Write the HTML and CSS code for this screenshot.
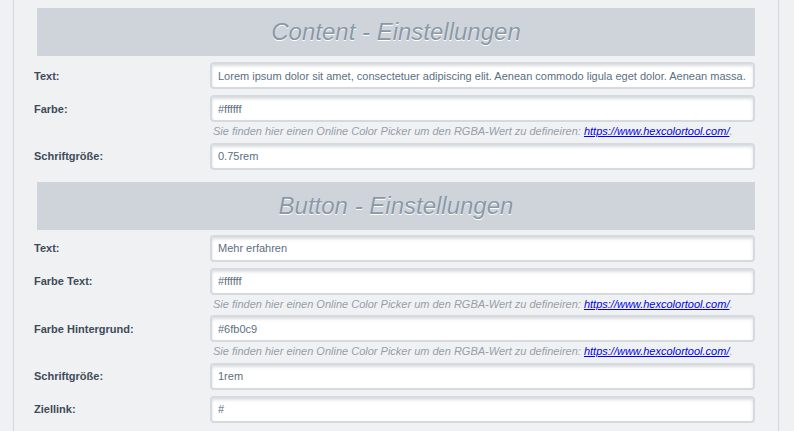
FILE: index.html
```html
<!DOCTYPE html>
<html lang="de">
<head>
  <meta charset="UTF-8" />
  <title>Einstellungen</title>
  <link rel="stylesheet" href="styles.css">
</head>
<body>
  <div class="panel">
    <h2 class="section-title">Content - Einstellungen</h2>
    <div class="form-row">
      <label>Text:</label>
      <input type="text" value="Lorem ipsum dolor sit amet, consectetuer adipiscing elit. Aenean commodo ligula eget dolor. Aenean massa." />
    </div>
    <div class="form-row">
      <label>Farbe:</label>
      <input type="text" value="#ffffff" />
      <div class="hint">Sie finden hier einen Online Color Picker um den RGBA-Wert zu defineiren: <a href="#">https://www.hexcolortool.com/</a>.</div>
    </div>
    <div class="form-row">
      <label>Schriftgröße:</label>
      <input type="text" value="0.75rem" />
    </div>

    <h2 class="section-title">Button - Einstellungen</h2>
    <div class="form-row">
      <label>Text:</label>
      <input type="text" value="Mehr erfahren" />
    </div>
    <div class="form-row">
      <label>Farbe Text:</label>
      <input type="text" value="#ffffff" />
      <div class="hint">Sie finden hier einen Online Color Picker um den RGBA-Wert zu defineiren: <a href="#">https://www.hexcolortool.com/</a>.</div>
    </div>
    <div class="form-row">
      <label>Farbe Hintergrund:</label>
      <input type="text" value="#6fb0c9" />
      <div class="hint">Sie finden hier einen Online Color Picker um den RGBA-Wert zu defineiren: <a href="#">https://www.hexcolortool.com/</a>.</div>
    </div>
    <div class="form-row">
      <label>Schriftgröße:</label>
      <input type="text" value="1rem" />
    </div>
    <div class="form-row">
      <label>Ziellink:</label>
      <input type="text" value="#" />
    </div>
  </div>
</body>
</html>
```

FILE: styles.css
```css
* {
  box-sizing: border-box;
}
body {
  margin: 0;
  background-color: #f0f1f3;
  font-family: "Liberation Sans", Arial, sans-serif;
  overflow: hidden;
}
.panel {
  margin-left: 13px;
  width: 766px;
  min-height: 431px;
  border-left: 1px solid #d3d7dc;
  border-right: 1px solid #d3d7dc;
  padding: 8px 23px 0 20px;
}
.section-title {
  margin: 12px 0 5px 3px;
  height: 48px;
  line-height: 48px;
  background-color: #cfd4db;
  color: #8b99a6;
  font-size: 24px;
  font-weight: normal;
  font-style: italic;
  text-align: center;
  text-shadow: 0 1px 0 #fff;
}
.section-title:first-child {
  margin-top: 0;
  margin-bottom: 6px;
}
.form-row {
  display: grid;
  grid-template-columns: 176px 1fr;
  align-items: center;
  margin-bottom: 6px;
}
.form-row label {
  font-size: 11px;
  font-weight: bold;
  color: #3e4b58;
}
.form-row input {
  height: 27px;
  width: 100%;
  padding: 0 6px;
  border: 2px solid #d5dae0;
  border-radius: 4px;
  background: #fff;
  box-shadow: inset 0 2px 3px rgba(90, 100, 110, 0.22);
  font-family: "Liberation Sans", Arial, sans-serif;
  font-size: 11px;
  color: #5b6f80;
  outline: none;
}
.hint {
  grid-column: 2;
  padding: 2px 0 0 3px;
  height: 14.5px;
  font-size: 11px;
  font-style: italic;
  color: #959fa9;
  line-height: 14px;
}
.hint a {
  color: #0000ee;
}
```
